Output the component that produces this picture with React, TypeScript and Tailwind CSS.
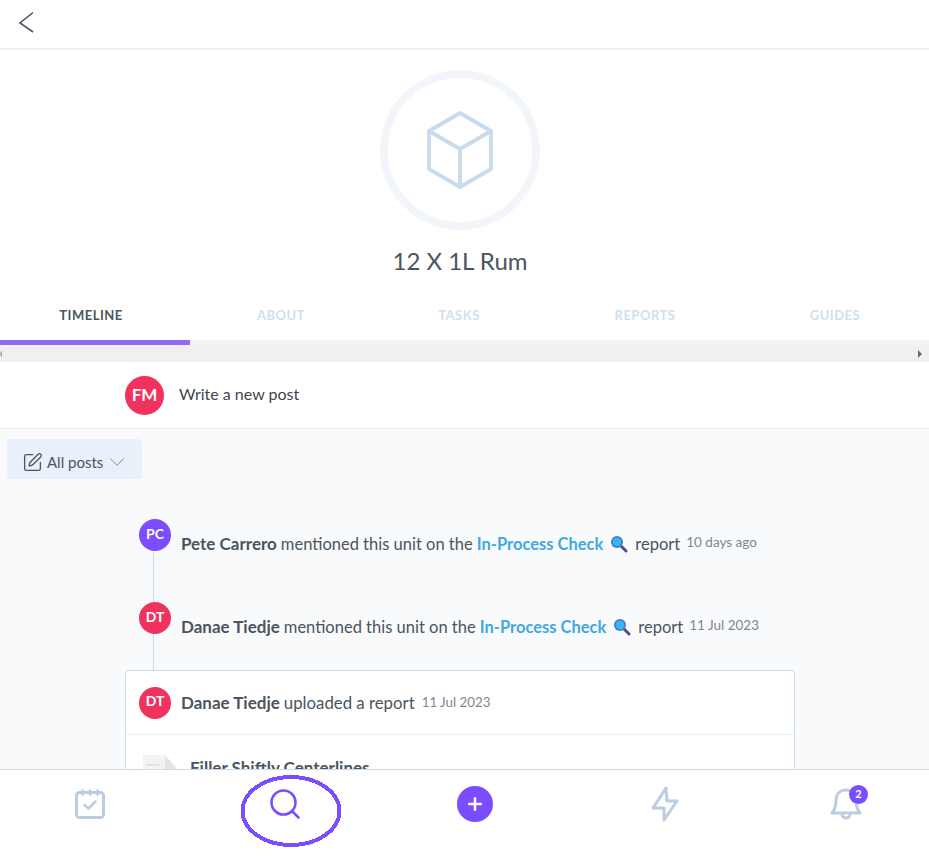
import { ChevronDown, Search, Plus, SquarePen } from "lucide-react";

const font = "font-['Lato','Noto_Sans',sans-serif]";

function Avatar({ label, color }: { label: string; color: string }) {
  return (
    <div
      className={`flex h-8 w-8 shrink-0 items-center justify-center rounded-full pb-[3px] text-sm font-bold text-white ${color}`}
    >
      {label}
    </div>
  );
}

function MagnifierEmoji() {
  return (
    <svg viewBox="0 0 18 18" className="mx-[7px] h-[18px] w-[18px] shrink-0">
      <path d="M10.5 10.5L16 16" stroke="#5b4a8a" strokeWidth="3" strokeLinecap="round" />
      <circle cx="7" cy="7" r="6" fill="#3f7fd0" />
      <circle cx="7" cy="7" r="4.2" fill="#38b6f0" />
    </svg>
  );
}

function Mention({ name, label, color, time, last }: any) {
  return (
    <div className={`flex px-[14px] ${last ? "h-[68px]" : "h-[83px]"}`}>
      {/* avatar and line down to the next entry */}
      <div className="flex w-8 shrink-0 flex-col items-start">
        <Avatar label={label} color={color} />
        <div className="ml-[14px] w-px flex-1 bg-[#c9dcee]" />
      </div>
      <div className="ml-[10px] flex h-8 items-center whitespace-nowrap pt-[18px] text-[16.5px] text-[#4a5560]">
        <span className="text-[17px] font-bold">{name}</span>
        <span className="ml-1">mentioned this unit on the</span>
        <span className="ml-1 font-bold text-[#3fa9e0]">In-Process Check</span>
        <MagnifierEmoji />
        <span>report</span>
        <span className="mb-[3px] ml-[6px] text-[13.5px] text-[#7c8794]">{time}</span>
      </div>
    </div>
  );
}

export default function App() {
  const tabs = [
    { name: "ABOUT", w: "w-[198px]" },
    { name: "TASKS", w: "w-[158px]" },
    { name: "REPORTS", w: "w-[214px]" },
    { name: "GUIDES", w: "w-[166px]" },
  ];

  return (
    <div className={`flex h-[868px] w-[929px] flex-col overflow-hidden bg-white ${font}`}>
      <main className="flex min-h-0 flex-1 flex-col overflow-hidden">
        {/* Header */}
        <div className="flex h-[50px] shrink-0 items-center border-b-2 border-[#e8f1fa] pb-1 pl-[18px]">
          <svg viewBox="0 0 16 22" className="h-[22px] w-4 text-[#4a5560]" fill="none" stroke="currentColor" strokeWidth="1.6">
            <path d="M15 1.5L2 12L15 21" />
          </svg>
        </div>

        {/* Unit */}
        <div className="flex w-[920px] shrink-0 flex-col items-center pt-5">
          <div className="flex h-40 w-40 items-center justify-center rounded-full border-[8px] border-[#f2f6fa]">
            <svg viewBox="0 0 68 80" className="h-20 w-[68px]" fill="none" stroke="#c8dcee" strokeWidth="4" strokeLinejoin="round">
              <path d="M34 3L65 21V59L34 77L3 59V21Z" />
              <path d="M3 21L34 39L65 21M34 39V77" />
            </svg>
          </div>
          <h1 className="mt-[14px] text-[24px] leading-[34px] text-[#4a5560]">12 X 1L Rum</h1>
        </div>

        {/* Tabs */}
        <div className="mt-[28px] flex h-[34px] shrink-0 text-[13px] font-bold tracking-[0.5px]">
          <div className="w-[182px] text-center text-[#4a5560]">TIMELINE</div>
          {tabs.map((t) => (
            <div key={t.name} className={`${t.w} text-center text-[#cfe0f0]`}>
              {t.name}
            </div>
          ))}
        </div>
        <div className="h-[5px] shrink-0 bg-[#f1f5f9]">
          <div className="h-full w-[190px] bg-[#8f6cf5]" />
        </div>

        {/* Scrollbar */}
        <div className="flex h-[17px] shrink-0 items-center justify-between bg-[#f0f0f0] pr-[7px]">
          <div className="h-0 w-0 border-y-[4px] border-r-[2px] border-y-transparent border-r-[#a3a3a3]" />
          <div className="h-0 w-0 border-y-[4px] border-l-[4px] border-y-transparent border-l-[#6b6b6b]" />
        </div>

        {/* New post */}
        <div className="flex h-[67px] shrink-0 items-center border-b border-[#e8eff7] pl-[125px]">
          <div className="flex h-[39px] w-[39px] items-center justify-center rounded-full bg-[#f0325f] text-[17px] font-bold text-white">
            FM
          </div>
          <span className="mb-[2px] ml-[15px] text-[16px] text-[#3f4650]">Write a new post</span>
        </div>

        <div className="min-h-0 flex-1 overflow-hidden bg-[#f8fafc]">
          {/* Filter */}
          <div className="ml-[7px] mt-[10px] flex h-10 w-[135px] items-center rounded bg-[#e8f0f9] pl-[15px] pt-[6px] text-[#4a5560]">
            <SquarePen size={21} strokeWidth={1.5} />
            <span className="ml-[4px] text-[15px]">All posts</span>
            <ChevronDown size={26} strokeWidth={0.9} className="ml-[1px] text-[#7c8794]" />
          </div>

          {/* Timeline */}
          <div className="ml-[125px] mt-10 w-[670px]">
            <Mention name="Pete Carrero" label="PC" color="bg-[#7a4dff]" time="10 days ago" />
            <Mention name="Danae Tiedje" label="DT" color="bg-[#f0325f]" time="11 Jul 2023" last />
            <div className="rounded-t border border-[#c9dcee] bg-white">
              <div className="flex h-[64px] items-center whitespace-nowrap border-b border-[#e8eff7] px-[13px]">
                <Avatar label="DT" color="bg-[#f0325f]" />
                <span className="ml-[10px] text-[17px] font-bold text-[#4a5560]">Danae Tiedje</span>
                <span className="ml-1 text-[16.8px] text-[#4a5560]">uploaded a report</span>
                <span className="ml-[7px] text-[13.3px] text-[#7c8794]">11 Jul 2023</span>
              </div>
              <div className="flex items-start px-[17px] pt-[20px]">
                <svg viewBox="0 0 34 40" className="h-10 w-[34px] shrink-0">
                  <path d="M0 0H22L34 14V40H0Z" fill="#f3f3f3" />
                  <path d="M22 0L34 14H22Z" fill="#e4e4e4" />
                  <path d="M3 10H17M3 16H17" stroke="#e2e2e2" strokeWidth="2" />
                </svg>
                <span className="ml-[13px] text-[17px] font-bold text-[#4a5560]">Filler Shiftly Centerlines</span>
              </div>
            </div>
          </div>
        </div>
      </main>

      {/* Bottom nav */}
      <nav className="relative flex h-[99px] shrink-0 border-t border-[#c9dcee] bg-white pt-[16px] text-[#bccde2]">
        <div className="flex h-9 w-[180px] items-center justify-center">
          <svg viewBox="0 0 30 30" className="h-[30px] w-[30px]" fill="none" stroke="currentColor" strokeWidth="3" strokeLinecap="round" strokeLinejoin="round">
            <rect x="1.5" y="3.5" width="27" height="25" rx="3" />
            <path d="M7.5 1.5V5.5M15 1.5V5.5M22.5 1.5V5.5" strokeWidth="2.5" />
            <path d="M9.5 16L13.5 19.5L20.5 12.5" strokeWidth="2.5" />
          </svg>
        </div>
        <div className="flex h-9 w-[210px] items-center justify-center text-[#7a4dff]">
          <Search size={36} strokeWidth={1.7} />
        </div>
        <div className="flex h-9 w-[170px] items-center justify-center">
          <div className="flex h-9 w-9 items-center justify-center rounded-full bg-[#7a4dff] text-white">
            <Plus size={20} strokeWidth={3} />
          </div>
        </div>
        <div className="flex h-9 w-[210px] items-center justify-center">
          <svg viewBox="0 0 28 36" className="h-9 w-7" fill="none" stroke="currentColor" strokeWidth="3" strokeLinejoin="round">
            <path d="M15 2L2 22H13V34L26 15H16Z" />
          </svg>
        </div>
        <div className="flex h-9 w-[152px] items-center justify-center">
          <div className="relative">
            <svg viewBox="0 0 32 32" className="block h-8 w-8" fill="none" stroke="currentColor" strokeWidth="3" strokeLinejoin="round">
              <path d="M2 25C5 21 6 18 6 13C6 6 10 2 16 2C22 2 26 6 26 13C26 18 27 21 30 25Z" />
              <path d="M12 26A4 4 0 0 0 20 26" />
            </svg>
            <span className="absolute -right-[6px] -top-[3px] flex h-[19px] w-[19px] items-center justify-center rounded-full bg-[#7a4dff] text-[11px] font-bold text-white">
              2
            </span>
          </div>
        </div>
        {/* hand drawn circle over the search icon */}
        <svg
          viewBox="0 0 102 74"
          className="absolute left-[240px] top-[4px] h-[74px] w-[102px]"
          shapeRendering="crispEdges"
        >
          <ellipse cx="51" cy="37" rx="48.5" ry="34" fill="none" stroke="#7a4dff" strokeWidth="4" />
        </svg>
      </nav>
    </div>
  );
}
